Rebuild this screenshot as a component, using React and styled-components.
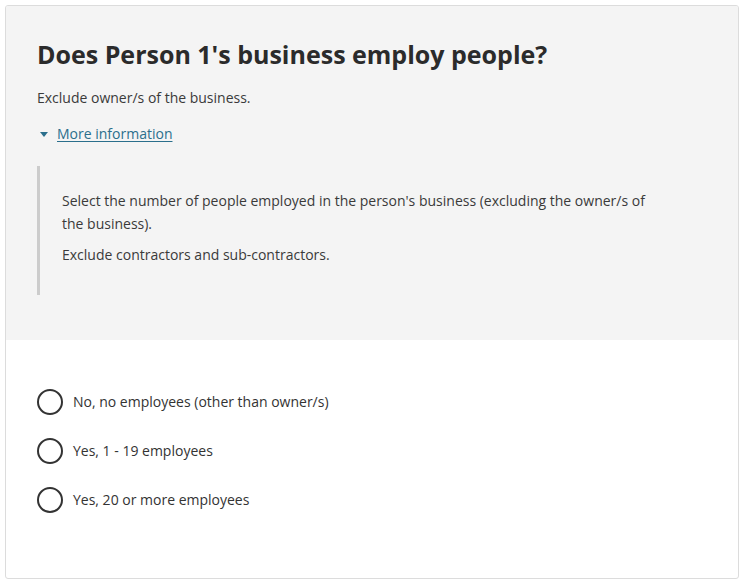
import React from 'react';
import styled, { createGlobalStyle } from 'styled-components';

const GlobalStyle = createGlobalStyle`
  html, body {
    margin: 0;
    padding: 0;
    background: #ffffff;
  }
  body {
    font-family: 'Open Sans', 'Noto Sans', sans-serif;
    color: #333333;
  }
`;

const Page = styled.div`
  padding: 5px 6px 6px 5px;
`;

const Card = styled.div`
  border: 1px solid #dcdcdc;
  border-radius: 3px;
  height: 574px;
  box-sizing: border-box;
  display: flex;
  flex-direction: column;
  overflow: hidden;
`;

const Header = styled.div`
  background: #f4f4f4;
  height: 334px;
  box-sizing: border-box;
  padding: 31px 31px 0 31px;
`;

const Title = styled.h1`
  margin: 0;
  font-size: 25px;
  line-height: 34px;
  font-weight: 700;
  color: #2b2b2b;
`;

const Hint = styled.p`
  margin: 17px 0 0 0;
  font-size: 14px;
  line-height: 20px;
  color: #3a3a3a;
`;

const Toggle = styled.div`
  margin-top: 16px;
  display: flex;
  align-items: center;
  gap: 9px;
  padding-left: 3px;
`;

const Caret = styled.span`
  width: 0;
  height: 0;
  border-left: 4px solid transparent;
  border-right: 4px solid transparent;
  border-top: 5px solid #2b6f8c;
`;

const Link = styled.a`
  font-size: 14px;
  line-height: 20px;
  color: #2b6f8c;
  text-decoration: underline;
  text-underline-offset: 2px;
`;

const Details = styled.div`
  margin-top: 22px;
  border-left: 3px solid #cccccc;
  padding: 23px 0 30px 22px;
  height: 129px;
  box-sizing: border-box;
`;

const DetailText = styled.p`
  margin: 0 0 8px 0;
  font-size: 14px;
  line-height: 23px;
  color: #3a3a3a;
  max-width: 600px;
`;

const Options = styled.div`
  padding: 49px 31px 0 31px;
  display: flex;
  flex-direction: column;
  gap: 23px;
`;

const Option = styled.label`
  display: flex;
  align-items: center;
  gap: 10px;
  cursor: pointer;
`;

const Radio = styled.span`
  width: 26px;
  height: 26px;
  box-sizing: border-box;
  border: 2px solid #333333;
  border-radius: 50%;
  flex: none;
`;

const OptionText = styled.span`
  font-size: 14px;
  line-height: 20px;
  color: #333333;
`;

const options = [
  'No, no employees (other than owner/s)',
  'Yes, 1 - 19 employees',
  'Yes, 20 or more employees',
];

export default function App() {
  return (
    <>
      <GlobalStyle />
      <Page>
        <Card>
          <Header>
            <Title>Does Person 1's business employ people?</Title>
            <Hint>Exclude owner/s of the business.</Hint>
            <Toggle>
              <Caret />
              <Link href="#">More information</Link>
            </Toggle>
            <Details>
              <DetailText>
                Select the number of people employed in the person's business (excluding the owner/s of the business).
              </DetailText>
              <DetailText>Exclude contractors and sub-contractors.</DetailText>
            </Details>
          </Header>
          <Options>
            {options.map((o) => (
              <Option key={o}>
                <Radio />
                <OptionText>{o}</OptionText>
              </Option>
            ))}
          </Options>
        </Card>
      </Page>
    </>
  );
}
